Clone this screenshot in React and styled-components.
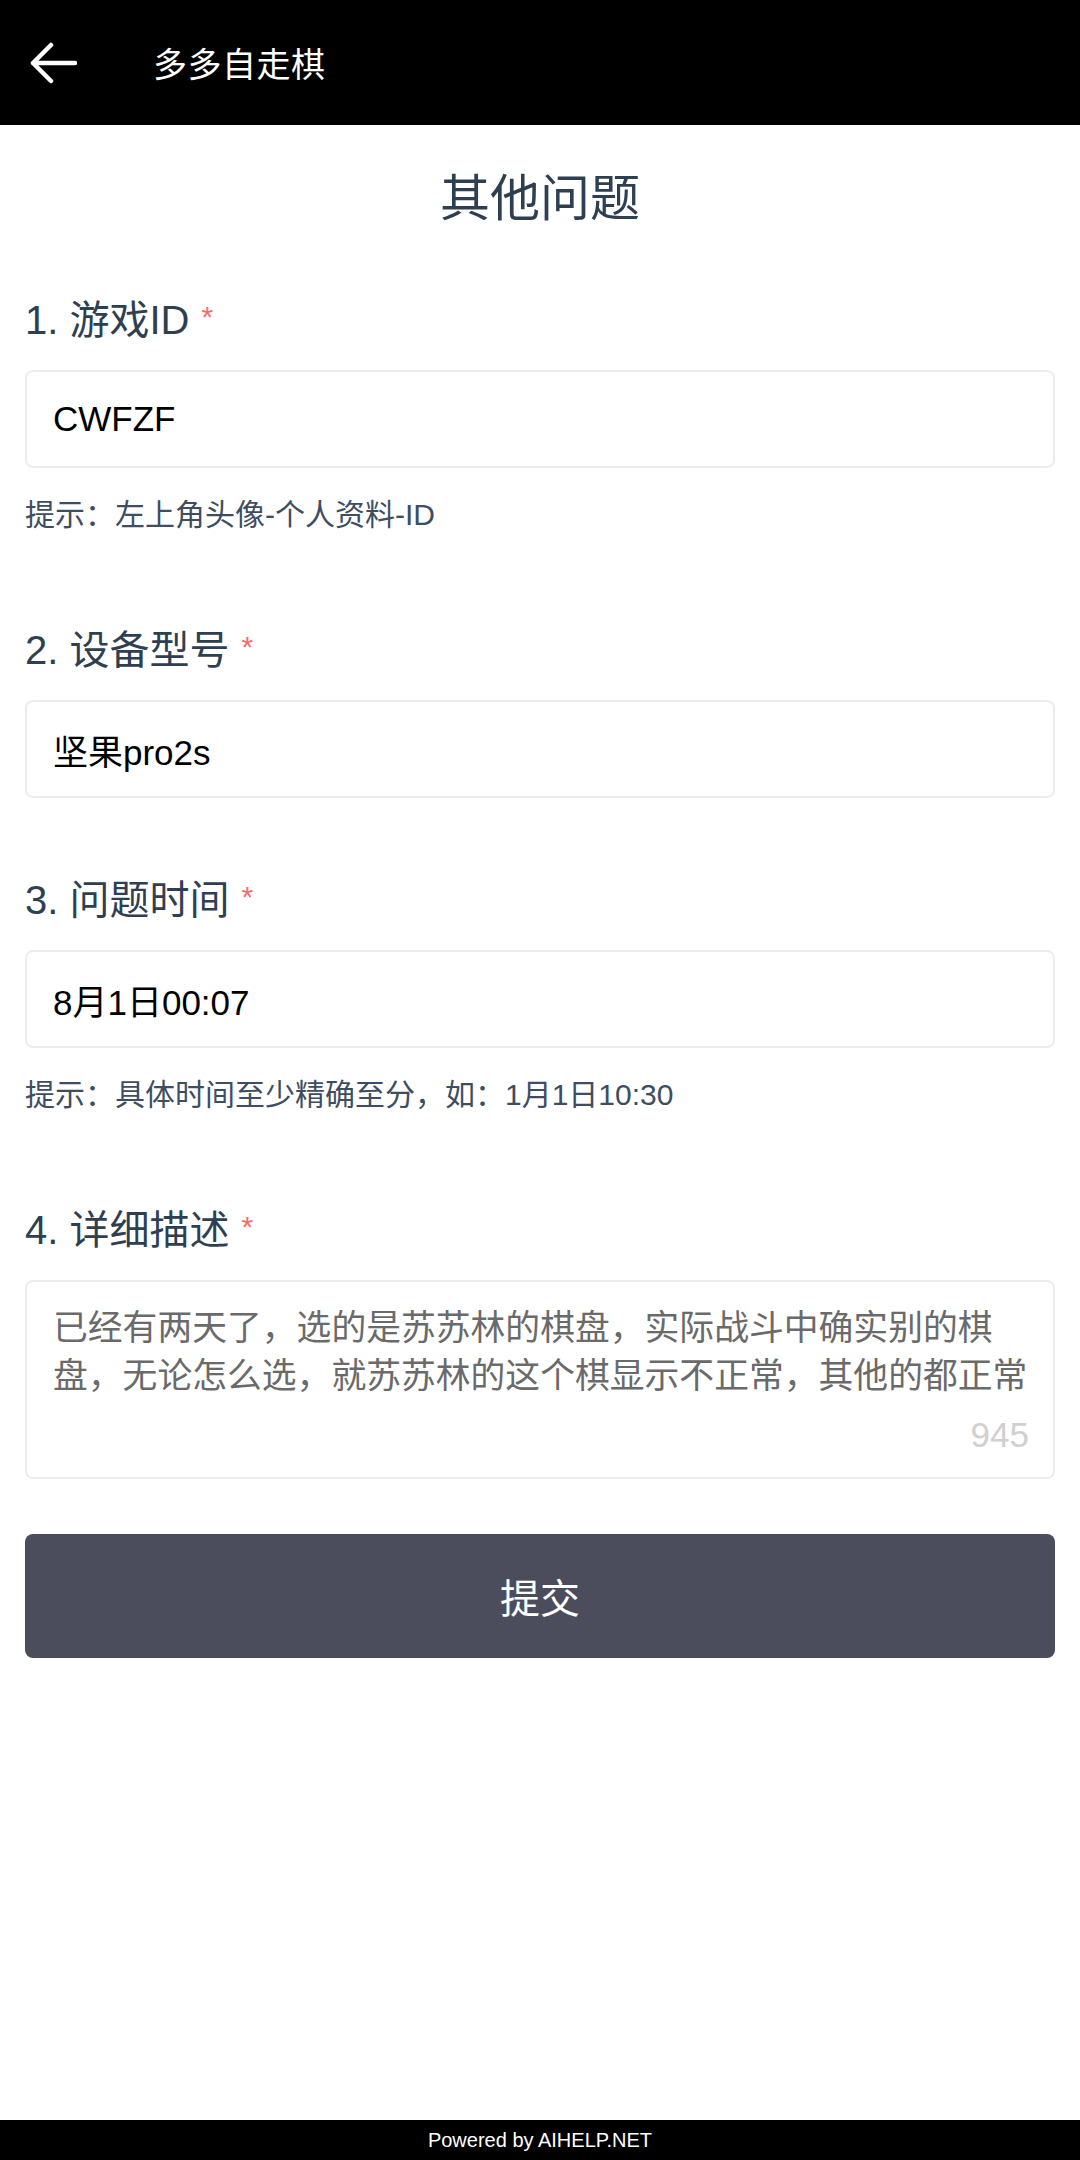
import React from 'react'
import styled, { createGlobalStyle } from 'styled-components'

const GlobalStyle = createGlobalStyle`
    html, body {
        margin: 0;
        padding: 0;
        background: #fff;
    }
    * {
        box-sizing: border-box;
    }
`

const Page = styled.div`
    min-height: 100vh;
    display: flex;
    flex-direction: column;
    font-family: "Liberation Sans", "Noto Sans CJK SC", sans-serif;
`
const Header = styled.div`
    height: 125px;
    background-color: #000;
    display: flex;
    align-items: center;
    padding-left: 29px;
    gap: 76px;
`
const BackButton = styled.div`
    width: 48px;
    height: 42px;
    display: flex;
    align-items: center;
    justify-content: center;
`
const HeaderTitle = styled.div`
    color: #fff;
    font-size: 34px;
    letter-spacing: 0.5px;
`
const Form = styled.div`
    flex: 1;
    padding: 0 25px;
    display: flex;
    flex-direction: column;
`
const Title = styled.h1`
    margin: 44px 0 64px;
    font-size: 50px;
    line-height: 60px;
    font-weight: 400;
    color: #2f3f52;
    text-align: center;
`
const Field = styled.div`
    margin-bottom: ${props => props.last ? '55px' : '75px'};
`
const Label = styled.div`
    height: 48px;
    display: flex;
    align-items: center;
    font-size: 40px;
    color: #2f3f52;
    margin-bottom: 29px;
`
const Star = styled.span`
    color: #f56c6c;
    font-size: 30px;
    line-height: 0;
    margin-left: 12px;
    align-self: flex-start;
    margin-top: 24px;
`
const Input = styled.div`
    height: 98px;
    border: 2px solid #ececec;
    border-radius: 8px;
    padding: 0 26px;
    display: flex;
    align-items: center;
    font-size: 35px;
    color: #000;
`
const Hint = styled.div`
    height: 40px;
    display: flex;
    align-items: center;
    font-size: 30px;
    color: #3e4d5f;
    margin: 24px 0 16px;
`
const TextArea = styled.div`
    height: 199px;
    border: 2px solid #ececec;
    border-radius: 8px;
    padding: 22px 20px 0 26px;
    display: flex;
    flex-direction: column;
`
const AreaText = styled.div`
    font-size: 34.8px;
    line-height: 48px;
    color: #6a6a6a;
`
const Counter = styled.div`
    margin-top: auto;
    margin-bottom: 22px;
    align-self: flex-end;
    font-size: 35px;
    line-height: 40px;
    color: #d0d0d0;
    margin-right: 4px;
`
const Submit = styled.button`
    height: 124px;
    width: 100%;
    border: none;
    border-radius: 8px;
    background-color: #4b4d5c;
    color: #fff;
    font-family: inherit;
    font-size: 40px;
    cursor: pointer;
`
const Footer = styled.div`
    height: 40px;
    background-color: #000;
    color: #fff;
    font-size: 20px;
    display: flex;
    align-items: center;
    justify-content: center;
`

const BackArrow = () => (
    <svg width="48" height="42" viewBox="0 0 48 42">
        <path d="M46 21 H4 M22 3 L4 21 L22 39" fill="none" stroke="#fff" strokeWidth="4.5" strokeLinecap="round" strokeLinejoin="round" />
    </svg>
)

const fields = [
    { label: '1. 游戏ID', value: 'CWFZF', hint: '提示：左上角头像-个人资料-ID' },
    { label: '2. 设备型号', value: '坚果pro2s' },
    { label: '3. 问题时间', value: '8月1日00:07', hint: '提示：具体时间至少精确至分，如：1月1日10:30' },
]

const App = () => {
  return (
    <Page>
      <GlobalStyle />
      <Header>
        <BackButton><BackArrow /></BackButton>
        <HeaderTitle>多多自走棋</HeaderTitle>
      </Header>
      <Form>
        <Title>其他问题</Title>
        {fields.map(f => (
          <Field key={f.label}>
            <Label>{f.label}<Star>*</Star></Label>
            <Input>{f.value}</Input>
            {f.hint && <Hint>{f.hint}</Hint>}
          </Field>
        ))}
        <Field last>
          <Label>4. 详细描述<Star>*</Star></Label>
          <TextArea>
            <AreaText>已经有两天了，选的是苏苏林的棋盘，实际战斗中确实别的棋盘，无论怎么选，就苏苏林的这个棋显示不正常，其他的都正常</AreaText>
            <Counter>945</Counter>
          </TextArea>
        </Field>
        <Submit>提交</Submit>
      </Form>
      <Footer>Powered by AIHELP.NET</Footer>
    </Page>
  )
}

export default App
